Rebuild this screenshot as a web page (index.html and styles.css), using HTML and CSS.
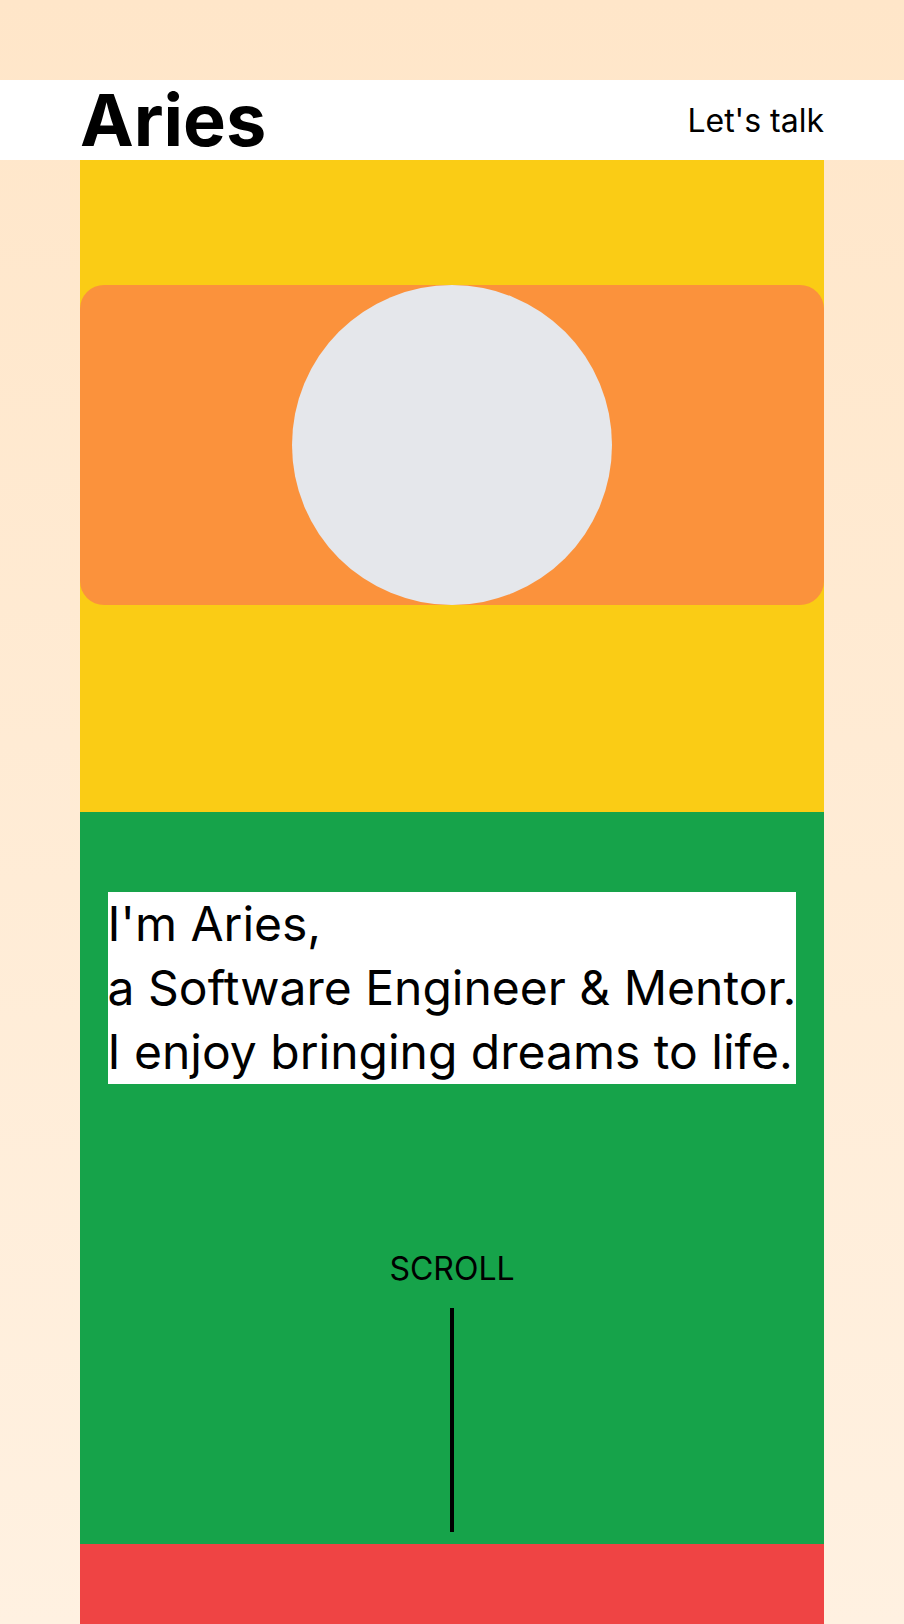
FILE: index.html
```html
<!DOCTYPE html>
<html lang="en">
<head>
<meta charset="utf-8">
<title>Aries</title>
<link rel="stylesheet" href="styles.css">
</head>
<body>
  <header class="site-header">
    <div class="header-inner">
      <a class="brand" href="#">Aries</a>
      <a class="talk" href="#">Let's talk</a>
    </div>
  </header>
  <main class="page">
    <section class="hero-media">
      <div class="media-card">
        <div class="avatar"></div>
      </div>
    </section>
    <section class="intro">
      <h1 class="intro-text">I'm Aries,<br>a Software Engineer &amp; Mentor.<br>I enjoy bringing dreams to life.</h1>
      <div class="scroll">
        <span class="scroll-label">SCROLL</span>
        <span class="scroll-line"></span>
      </div>
    </section>
    <section class="next"></section>
  </main>
</body>
</html>
```
FILE: styles.css
```css
* { box-sizing: border-box; }
html, body { margin: 0; padding: 0; }
body {
  font-family: Inter, "Noto Sans", "Liberation Sans", sans-serif;
  color: #000;
  background: linear-gradient(180deg, #ffe6c9 0%, #fff1e1 100%);
  padding-top: 80px;
}
a { color: inherit; text-decoration: none; }

.site-header {
  background: #ffffff;
  height: 80px;
}
.header-inner {
  width: 744px;
  margin: 0 auto;
  height: 100%;
  display: flex;
  align-items: center;
  justify-content: space-between;
}
.brand {
  font-size: 72px;
  line-height: 72px;
  font-weight: 700;
}
.talk {
  font-size: 32px;
  line-height: 36px;
  font-weight: 400;
  margin-top: 2px;
}

.page {
  width: 744px;
  margin: 0 auto;
}
.hero-media {
  background: #facc15;
  padding: 125px 0 207px;
}
.media-card {
  height: 320px;
  background: #fb923c;
  border-radius: 24px;
  display: flex;
  justify-content: center;
}
.avatar {
  width: 320px;
  height: 320px;
  border-radius: 50%;
  background: #e5e7eb;
}

.intro {
  background: #16a34a;
  height: 732px;
  padding-top: 80px;
  display: flex;
  flex-direction: column;
  align-items: center;
}
.intro-text {
  margin: 0;
  background: #ffffff;
  font-size: 48px;
  line-height: 64px;
  font-weight: 400;
  width: fit-content;
}
.scroll {
  margin-top: 167px;
  display: flex;
  flex-direction: column;
  align-items: center;
}
.scroll-label {
  font-size: 32px;
  line-height: 36px;
}
.scroll-line {
  margin-top: 21px;
  width: 4px;
  height: 224px;
  background: #000;
}
.next {
  background: #ef4444;
  height: 80px;
}
```
